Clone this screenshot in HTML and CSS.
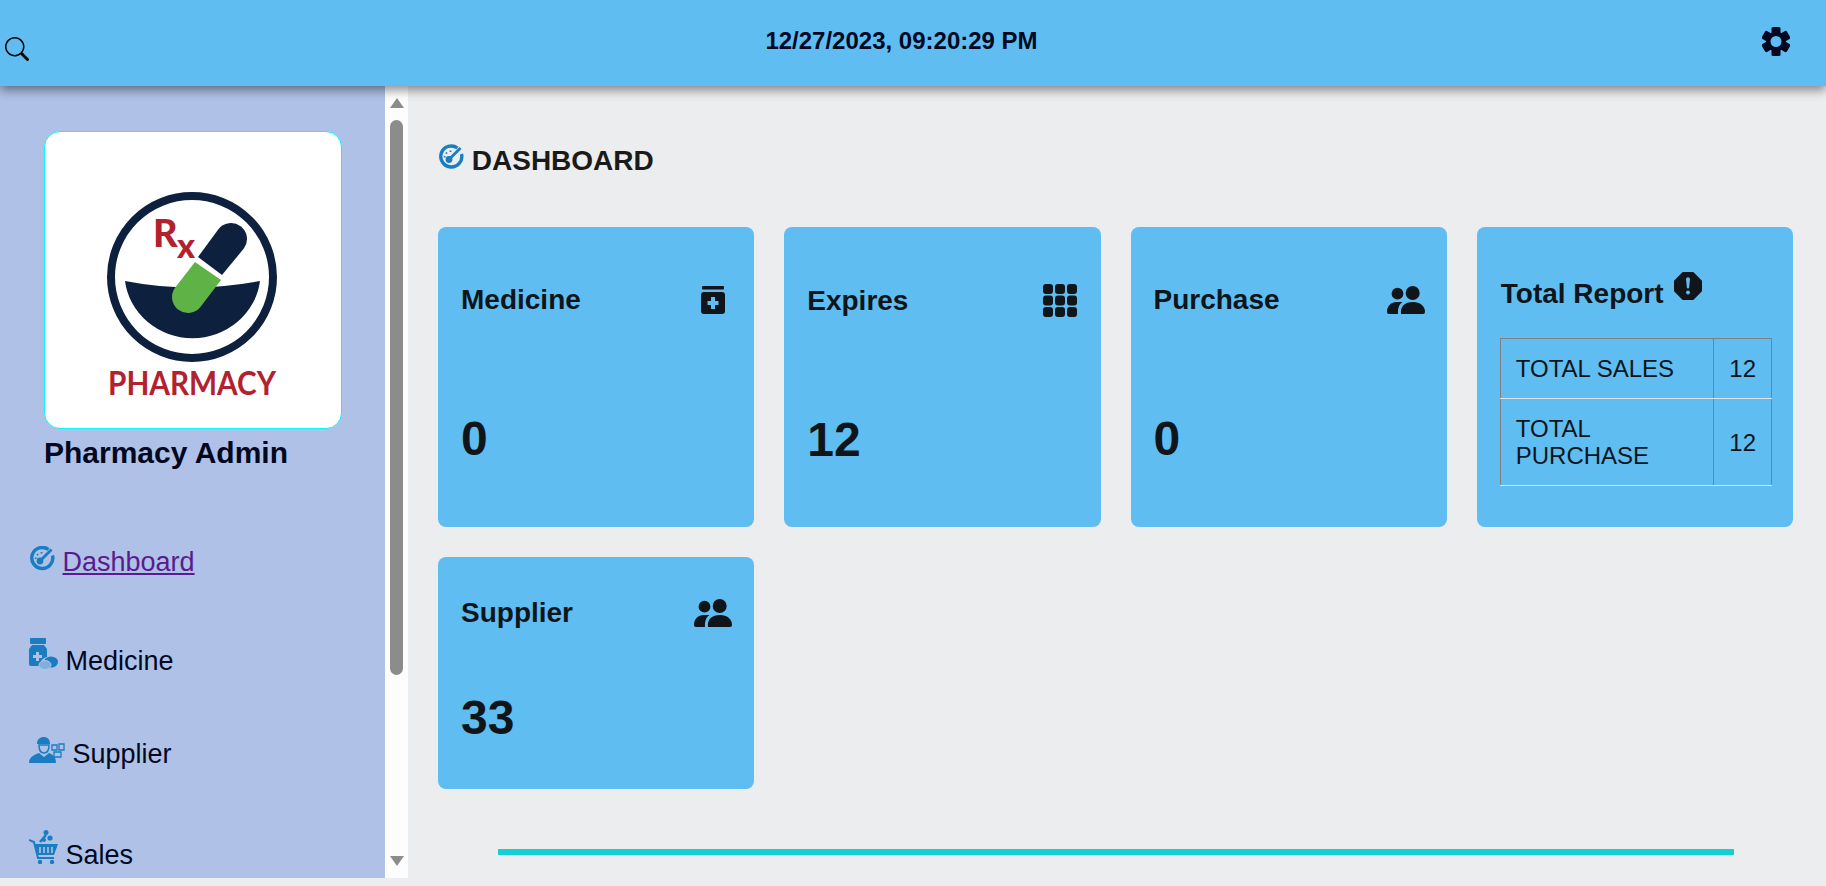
FILE: index.html
```html
<!DOCTYPE html>
<html lang="en">
<head>
  <meta charset="UTF-8">
  <meta name="viewport" content="width=device-width, initial-scale=1.0">
  <title>Pharmacy Admin</title>
  <link rel="stylesheet" href="styles.css">
</head>
<body>

  <!-- Top bar -->
  <header class="topbar">
    <span class="searchBtn">
      <svg class="searchIcon" viewBox="0 0 16 16" fill="#000"><path d="M11.742 10.344a6.5 6.5 0 1 0-1.397 1.398h-.001c.03.04.062.078.098.115l3.85 3.85a1 1 0 0 0 1.415-1.414l-3.85-3.85a1.007 1.007 0 0 0-.115-.1zM12 6.5a5.5 5.5 0 1 1-11 0 5.5 5.5 0 0 1 11 0z"/></svg>
    </span>
    <span class="clock">12/27/2023, 09:20:29 PM</span>
    <svg class="gearIcon" viewBox="0 0 28 29">
      <g fill="#02081f">
        <rect x="9.5" y="0" width="9" height="7" rx="1.5"/>
        <rect x="9.5" y="22" width="9" height="7" rx="1.5"/>
        <rect x="9.5" y="0" width="9" height="7" rx="1.5" transform="rotate(60 14 14.5)"/>
        <rect x="9.5" y="22" width="9" height="7" rx="1.5" transform="rotate(60 14 14.5)"/>
        <rect x="9.5" y="0" width="9" height="7" rx="1.5" transform="rotate(120 14 14.5)"/>
        <rect x="9.5" y="22" width="9" height="7" rx="1.5" transform="rotate(120 14 14.5)"/>
      </g>
      <circle cx="14" cy="14.5" r="7.75" fill="none" stroke="#02081f" stroke-width="4.5"/>
    </svg>
  </header>

  <div class="layout">

    <!-- Sidebar -->
    <aside class="sidebar">
      <div class="logoBox">
        <svg class="logo" viewBox="0 0 297 297">
          <circle cx="147" cy="146" r="81" fill="none" stroke="#0d213e" stroke-width="8"/>
          <path d="M80 150 Q147 163 215 150 A68 65 0 0 1 80 150 Z" fill="#0d213e"/>
          <path d="M153 126 L173.2 98.4 A16 16 0 0 1 198.8 117.6 L177 144 Z" fill="#0d213e"/>
          <path d="M150 131 L176 149 L155.8 175.6 A16 16 0 0 1 130.2 156.4 Z" fill="#5fb346"/>
          <text class="logoR" x="108" y="116">R</text>
          <text class="logoX" x="132" y="127">x</text>
          <text class="logoName" x="63" y="264" textLength="168" lengthAdjust="spacingAndGlyphs">PHARMACY</text>
        </svg>
      </div>
      <h2 class="adminName">Pharmacy Admin</h2>

      <ul class="navList">
        <li>
          <svg class="navIcon" width="26" height="25" viewBox="0 0 26 25" fill="none" stroke="#1a7dc2">
            <path d="M19.5 3.5 A10.5 10.5 0 1 0 23.5 9.5" stroke-width="3.4"/>
            <path d="M11 15 L22.5 3.5" stroke-width="2.8"/>
            <circle cx="11" cy="15" r="3.4" fill="#1a7dc2" stroke="none"/>
            <path d="M6 12 l1.5 .5 M8 8 l1 1.2 M12.5 6 v1.5" stroke-width="1.8"/>
          </svg>
          <a class="navLink active" href="#">Dashboard</a>
        </li>
        <li>
          <svg class="navIcon" width="29" height="32" viewBox="0 0 29 32" fill="#1a7dc2">
            <rect x="1" y="0" width="16" height="6" rx="1"/>
            <path d="M3 7 H15 L18 11 V19 A7 7 0 0 0 12 28 H2 A2 2 0 0 1 0 26 V11 Z"/>
            <path d="M7 14 h3 v3 h3 v3 h-3 v3 h-3 v-3 h-3 v-3 h3 z" fill="#afc1e6"/>
            <ellipse cx="22" cy="24" rx="7" ry="5.5"/>
            <ellipse cx="16" cy="27" rx="6" ry="4.5" fill="#7fb0dc" stroke="#afc1e6"/>
          </svg>
          <a class="navLink" href="#">Medicine</a>
        </li>
        <li>
          <svg class="navIcon" width="36" height="26" viewBox="0 0 36 26" fill="#1a7dc2">
            <path d="M8 7 C8 2 11 0 15 0 C19 0 21 3 21 7 Z"/>
            <path d="M10 8 H20 C20 13 18 16 15 16 C12 16 10 13 10 8 Z" fill="none" stroke="#1a7dc2" stroke-width="1.5"/>
            <path d="M0 26 C0 20 5 18 10 16 L15 20 L20 16 C25 18 27 21 27 26 Z"/>
            <path d="M23 8 h5 v5 h-5 z M30 7 h5 v6 h-5 z M25 15 h7 v5 h-7 z" fill="none" stroke="#1a7dc2" stroke-width="1.3"/>
          </svg>
          <a class="navLink" href="#">Supplier</a>
        </li>
        <li>
          <svg class="navIcon" width="29" height="34" viewBox="0 0 29 34" fill="#1a7dc2">
            <path d="M0 10 L5 12 L9 28 H25" fill="none" stroke="#1a7dc2" stroke-width="2"/>
            <path d="M6 14 H29 L25 25 H9 Z"/>
            <path d="M11 17 v6 M15 17 v6 M19 17 v6 M23 17 v6" stroke="#afc1e6" stroke-width="1.6"/>
            <circle cx="11" cy="32" r="2.2"/>
            <circle cx="23" cy="32" r="2.2"/>
            <circle cx="17" cy="2.5" r="2.5"/>
            <circle cx="21" cy="8" r="2.6"/>
            <circle cx="15" cy="10" r="2"/>
            <path d="M11 12 L17 5" stroke="#1a7dc2" stroke-width="2.5"/>
          </svg>
          <a class="navLink" href="#">Sales</a>
        </li>
      </ul>
    </aside>

    <!-- Scrollbar of the sidebar -->
    <div class="sideScroll">
      <span class="arrowUp"></span>
      <span class="thumb"></span>
      <span class="arrowDown"></span>
    </div>

    <!-- Main content -->
    <main class="content">
      <h1 class="pageTitle">
        <svg class="titleIcon" width="26" height="26" viewBox="0 0 26 25" fill="none" stroke="#1a7dc2">
          <path d="M19.5 3.5 A10.5 10.5 0 1 0 23.5 9.5" stroke-width="3.4"/>
          <path d="M11 15 L22.5 3.5" stroke-width="2.8"/>
          <circle cx="11" cy="15" r="3.4" fill="#1a7dc2" stroke="none"/>
          <path d="M6 12 l1.5 .5 M8 8 l1 1.2 M12.5 6 v1.5" stroke-width="1.8"/>
        </svg>
        DASHBOARD
      </h1>

      <div class="cardGrid">
        <div class="card">
          <div class="cardHead">
            <span class="cardTitle">Medicine</span>
            <svg class="cardIcon bottleIcon" width="24" height="28" viewBox="0 0 24 28" fill="#0f1519">
              <rect x="1" y="0" width="22" height="3.5" rx="1"/>
              <path fill-rule="evenodd" d="M3 6 H21 A3 3 0 0 1 24 9 V25 A3 3 0 0 1 21 28 H3 A3 3 0 0 1 0 25 V9 A3 3 0 0 1 3 6 Z M10 11 V15 H6.5 V19 H10 V23 H14 V19 H17.5 V15 H14 V11 Z"/>
            </svg>
          </div>
          <div class="cardNum">0</div>
        </div>

        <div class="card">
          <div class="cardHead">
            <span class="cardTitle">Expires</span>
            <svg class="cardIcon gridIcon" width="34" height="33" viewBox="0 0 34 33" fill="#0f1519">
              <rect x="0" y="0" width="10" height="10" rx="3"/>
              <rect x="12" y="0" width="10" height="10" rx="3"/>
              <rect x="24" y="0" width="10" height="10" rx="3"/>
              <rect x="0" y="11.5" width="10" height="10" rx="3"/>
              <rect x="12" y="11.5" width="10" height="10" rx="3"/>
              <rect x="24" y="11.5" width="10" height="10" rx="3"/>
              <rect x="0" y="23" width="10" height="10" rx="3"/>
              <rect x="12" y="23" width="10" height="10" rx="3"/>
              <rect x="24" y="23" width="10" height="10" rx="3"/>
            </svg>
          </div>
          <div class="cardNum">12</div>
        </div>

        <div class="card">
          <div class="cardHead">
            <span class="cardTitle">Purchase</span>
            <svg class="cardIcon" width="38" height="28" viewBox="0 0 38 28" fill="#0f1519">
              <circle cx="25.7" cy="7" r="7"/>
              <circle cx="10.5" cy="7.7" r="5.9"/>
              <path d="M14 28 C13 20 18 16 26 16 C33 16 38 20 38 26 A2 2 0 0 1 36 28 Z"/>
              <path d="M0 26 C0 20 4 16 10 16 H15.5 C12 18 10.5 23 11 28 H2 A2 2 0 0 1 0 26 Z"/>
            </svg>
          </div>
          <div class="cardNum">0</div>
        </div>

        <div class="card reportCard">
          <div class="reportHead">
            <span class="cardTitle">Total Report</span>
            <svg class="reportIcon" width="28" height="28" viewBox="-0.6 -0.6 17.2 17.2">
              <path d="M5 0 H11 L16 5 V11 L11 16 H5 L0 11 V5 Z" fill="#0f1519" stroke="#0f1519" stroke-width="1.2" stroke-linejoin="round"/>
              <path d="M8 2.6 c.8 0 1.3 .6 1.2 1.3 l-.5 5 a.7 .7 0 0 1 -1.4 0 l-.5 -5 c-.1 -.7 .4 -1.3 1.2 -1.3 z" fill="#5fbdf2"/>
              <circle cx="8" cy="12" r="1.2" fill="#5fbdf2"/>
            </svg>
          </div>
          <table class="reportTable">
            <tr>
              <td>TOTAL SALES</td>
              <td>12</td>
            </tr>
            <tr>
              <td>TOTAL PURCHASE</td>
              <td>12</td>
            </tr>
          </table>
        </div>

        <div class="card shortCard">
          <div class="cardHead">
            <span class="cardTitle">Supplier</span>
            <svg class="cardIcon" width="38" height="28" viewBox="0 0 38 28" fill="#0f1519">
              <circle cx="25.7" cy="7" r="7"/>
              <circle cx="10.5" cy="7.7" r="5.9"/>
              <path d="M14 28 C13 20 18 16 26 16 C33 16 38 20 38 26 A2 2 0 0 1 36 28 Z"/>
              <path d="M0 26 C0 20 4 16 10 16 H15.5 C12 18 10.5 23 11 28 H2 A2 2 0 0 1 0 26 Z"/>
            </svg>
          </div>
          <div class="cardNum">33</div>
        </div>
      </div>

      <div class="tealBar"></div>
    </main>
  </div>

</body>
</html>
```

FILE: styles.css
```css
/* General Reset and Font Styling */
body {
  font-family: 'Liberation Sans', Arial, sans-serif;
  margin: 0;
  padding: 0;
  background: #ecedef;
  color: #000;
  height: 886px;
  overflow: hidden;
}

/* Top bar */
.topbar {
  position: relative;
  z-index: 2;
  height: 86px;
  box-sizing: border-box;
  background: #5fbdf2;
  box-shadow: 0 4px 10px rgba(0, 0, 0, 0.45);
  display: flex;
  justify-content: space-between;
  align-items: center;
  padding: 0 36px 4px 5px;
}

.searchBtn {
  width: 36px;
  height: 24px;
  margin-top: 16px;
}

.searchIcon {
  display: block;
  width: 24px;
  height: 24px;
}

.clock {
  font-size: 24px;
  font-weight: bold;
  color: #02081f;
}

.gearIcon {
  width: 28px;
  height: 29px;
}

.layout {
  display: flex;
  height: 792px;
}

/* Sidebar */
.sidebar {
  width: 385px;
  flex: none;
  background: #afc1e6;
  padding: 45px 0 0 44px;
  box-sizing: border-box;
  overflow: hidden;
}

.logoBox {
  width: 298px;
  height: 298px;
  box-sizing: border-box;
  background: #fff;
  border: 1px solid #10f4f8;
  border-radius: 16px;
  overflow: hidden;
}

.logo {
  display: block;
  width: 297px;
  height: 297px;
  margin-top: -1px;
}

.logoR,
.logoX,
.logoName {
  font-family: Lato, 'Liberation Sans', sans-serif;
  font-weight: 900;
  fill: #b2222e;
}

.logoR {
  font-size: 38px;
}

.logoX {
  font-size: 34px;
}

.logoName {
  font-size: 32px;
  font-weight: bold;
}

.adminName {
  font-size: 30px;
  font-weight: bold;
  color: #02081f;
  margin: 7px 0 0;
}

.navList {
  list-style: none;
  margin: 76px 0 0 -15px;
  padding: 0;
  display: flex;
  flex-direction: column;
  gap: 60px;
  font-size: 27px;
}

.navLink {
  color: #02081f;
  text-decoration: none;
}

.navLink.active {
  color: #591c90;
  text-decoration: underline;
}

/* Scrollbar next to the sidebar */
.sideScroll {
  width: 23px;
  flex: none;
  background: #fdfdfd;
  display: flex;
  flex-direction: column;
  align-items: center;
  padding: 12px 0;
  box-sizing: border-box;
}

.arrowUp {
  border-left: 7.5px solid transparent;
  border-right: 7.5px solid transparent;
  border-bottom: 10px solid #8c8c8c;
}

.thumb {
  width: 13px;
  height: 555px;
  margin-top: 12px;
  background: #8c8c8c;
  border-radius: 7px;
}

.arrowDown {
  margin-top: auto;
  border-left: 7.5px solid transparent;
  border-right: 7.5px solid transparent;
  border-top: 10px solid #8c8c8c;
}

/* Main content */
.content {
  flex: 1;
  padding: 58px 33px 0 30px;
}

.pageTitle {
  font-size: 28px;
  font-weight: bold;
  color: #1a1a1a;
  margin: 0 0 50px;
}

.titleIcon {
  vertical-align: 0;
}

.cardGrid {
  display: grid;
  grid-template-columns: repeat(4, 1fr);
  gap: 30px;
}

.card {
  background: #5fbdf2;
  border-radius: 8px;
  padding: 57px 22px 0 23px;
  color: #0f1519;
}

.cardHead {
  display: flex;
  justify-content: space-between;
  align-items: center;
}

.cardTitle {
  font-size: 28px;
  font-weight: bold;
}

.cardNum {
  font-size: 48px;
  font-weight: bold;
  margin-top: 95px;
}

.bottleIcon {
  margin-right: 7px;
}

.gridIcon {
  margin-right: 2px;
}

.shortCard {
  padding: 40px 22px 44px 23px;
}

.shortCard .cardNum {
  margin-top: 61px;
}

.reportCard {
  padding: 45px 21px 41px 23px;
}

.reportHead {
  margin-bottom: 28px;
  padding-left: 1px;
}

.reportIcon {
  vertical-align: 3px;
  margin-left: 6px;
}

.reportTable {
  width: 100%;
  border-collapse: collapse;
  font-size: 24px;
  line-height: 27px;
  border-top: 1px solid #808080;
}

.reportTable td {
  padding: 16px 15px;
  border-left: 1px solid #808080;
  border-right: 1px solid #808080;
  border-bottom: 1px solid #dee2e6;
}

.tealBar {
  height: 6px;
  background: #14d0d3;
  margin: 60px 59px 0 60px;
}
```
